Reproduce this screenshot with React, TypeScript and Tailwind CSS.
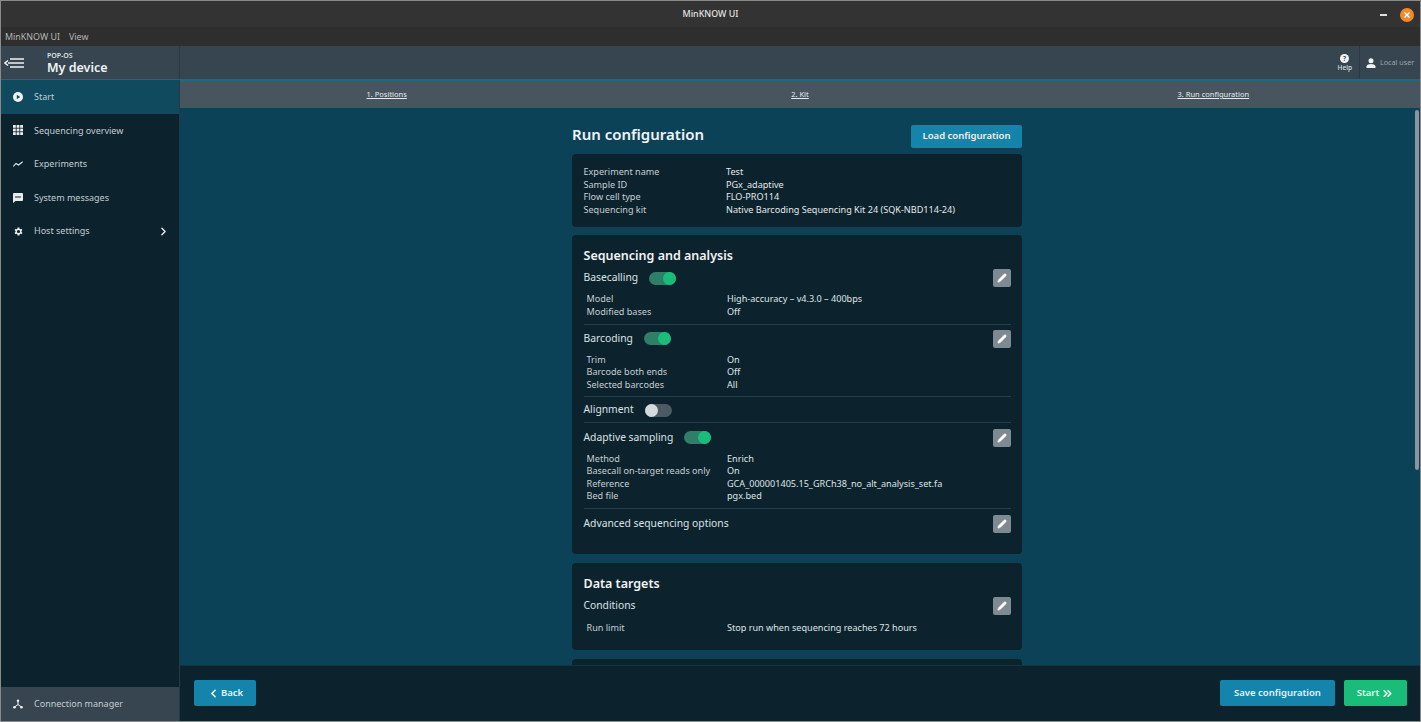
import { ChevronLeft, ChevronRight, ChevronsRight, Pencil } from "lucide-react";

const sideItems = [
  { label: "Start", icon: "play", active: true },
  { label: "Sequencing overview", icon: "grid" },
  { label: "Experiments", icon: "trend" },
  { label: "System messages", icon: "message" },
  { label: "Host settings", icon: "gear", arrow: true },
];

const SideIcon = ({ name }: { name: string }) => {
  if (name === "play")
    return (
      <svg width="10" height="10" viewBox="0 0 12 12">
        <circle cx="6" cy="6" r="6" fill="#f0f3f4" />
        <path d="M4.6 3.2 8.600 6 4.6 8.800z" fill="#0f4a5e" />
      </svg>
    );
  if (name === "grid")
    return (
      <svg width="10" height="10" viewBox="0 0 10 10" fill="#e8ecee">
        {[0, 3.6, 7.2].map((x) =>
          [0, 3.6, 7.2].map((y) => <rect key={`${x}-${y}`} x={x} y={y} width="2.8" height="2.8" />)
        )}
      </svg>
    );
  if (name === "trend")
    return (
      <svg width="10" height="6" viewBox="0 0 10 6" fill="none" stroke="#e8ecee" strokeWidth="1.1">
        <path d="M.3 5.500 3 2.500 5.500 4 9.700 .8" />
      </svg>
    );
  if (name === "message")
    return (
      <svg width="10" height="10" viewBox="0 0 10 10">
        <path d="M1 0h8a1 1 0 0 1 1 1v6a1 1 0 0 1-1 1H2.500L0 10V1a1 1 0 0 1 1-1z" fill="#e8ecee" />
        <rect x="2" y="3.500" width="6" height="1" fill="#0c232e" />
      </svg>
    );
  if (name === "gear")
    return (
      <svg width="11" height="11" viewBox="0 0 24 24" fill="#e8ecee">
        <path d="M19.400 13a7.500 7.500 0 0 0 0-2l2.100-1.600-2-3.500-2.500 1a7.500 7.500 0 0 0-1.700-1L15 3.300h-4l-.4 2.600a7.500 7.500 0 0 0-1.700 1l-2.500-1-2 3.500L6.500 11a7.500 7.500 0 0 0 0 2l-2.100 1.600 2 3.500 2.500-1a7.500 7.500 0 0 0 1.700 1l.4 2.600h4l.4-2.600a7.500 7.500 0 0 0 1.700-1l2.500 1 2-3.500zM13 15.500a3.500 3.500 0 1 1 0-7 3.500 3.500 0 0 1 0 7z" transform="translate(-1 0)" />
      </svg>
    );
  return null;
};

const EditButton = () => (
  <div className="ml-auto flex h-[18px] w-[18px] items-center justify-center rounded-[2px] bg-[#7d8a91]">
    <Pencil size={10} color="#ffffff" fill="#ffffff" strokeWidth={1.5} />
  </div>
);

const Toggle = ({ on }: { on: boolean }) =>
  on ? (
    <div className="relative ml-[11px] h-[13px] w-[27px] rounded-full bg-[#2f7f68]">
      <div className="absolute right-0 top-0 h-[13px] w-[13px] rounded-full bg-[#19bd79]" />
    </div>
  ) : (
    <div className="relative ml-[11px] h-[13px] w-[27px] rounded-full bg-[#4c5a64]">
      <div className="absolute left-0 top-0 h-[13px] w-[13px] rounded-full bg-[#d5dadd]" />
    </div>
  );

const Details = ({ rows }: { rows: string[][] }) => (
  <div className="pl-[3px]">
    {rows.map(([k, v]) => (
      <div key={k} className="flex h-[12.5px] items-center whitespace-nowrap text-[9.100px] leading-[12.5px]">
        <div className="w-[140.500px] text-[#c6ced2]">{k}</div>
        <div className="text-[#dfe4e6]">{v}</div>
      </div>
    ))}
  </div>
);

const Section = ({ title, toggle, edit = true }: { title: string; toggle?: boolean; edit?: boolean }) => (
  <div className="flex h-[18px] items-center">
    <span className="text-[10.300px] text-[#dde2e5]">{title}</span>
    {toggle !== undefined && <Toggle on={toggle} />}
    {edit && <EditButton />}
  </div>
);

const Divider = () => <div className="h-px bg-[#24404c]" />;

export default function App() {
  return (
    <div
      className="flex h-[722px] w-[1421px] flex-col overflow-hidden border border-[#8a8a8a] bg-[#0c232e]"
      style={{ fontFamily: '"Noto Sans", sans-serif' }}
    >
      <div className="relative flex h-[26px] shrink-0 items-center justify-center bg-[#333333] text-[8.900px] font-medium text-[#e4e4e4]">
        MinKNOW UI
        <div className="absolute right-[6px] top-[7px] flex items-center gap-[13px]">
          <div className="h-[1.500px] w-[7px] bg-[#e0e0e0]" />
          <div className="flex h-[14px] w-[14px] items-center justify-center rounded-full bg-[#f08a2c]">
            <svg width="6" height="6" viewBox="0 0 6 6" stroke="#ffffff" strokeWidth="1.400">
              <path d="M.5 .5l5 5M5.500 .5l-5 5" />
            </svg>
          </div>
        </div>
      </div>
      <div className="flex h-[19px] shrink-0 items-center gap-[9px] bg-[#2e2e2e] pl-[4px] text-[8.900px] text-[#b5b5b5]">
        <span>MinKNOW UI</span>
        <span>View</span>
      </div>
      <div className="flex h-[34px] shrink-0 border-b border-[#1b6a85] bg-[#36454f]">
        <div className="flex w-[179px] items-center border-r border-[#2c3a43] pt-[1px]">
          <svg width="22" height="10" viewBox="0 0 22 10" className="ml-[3px]" fill="none" stroke="#f0f3f4" strokeWidth="1.500">
            <path d="M6 1h14M4 5h16M6 9h14M4 2.500 1 5l3 2.500" />
          </svg>
          <div className="ml-[21px] flex flex-col">
            <span className="text-[7px] font-semibold leading-[9px] text-[#dde2e5]">POP-OS</span>
            <span className="text-[12.500px] font-semibold leading-[16px] text-[#f0f3f4]">My device</span>
          </div>
        </div>
        <div className="flex flex-1 items-center justify-end">
          <div className="flex flex-col items-center pr-[7px]">
            <svg width="9" height="9" viewBox="0 0 10 10">
              <circle cx="5" cy="5" r="5" fill="#f0f3f4" />
              <text x="5" y="7.500" textAnchor="middle" fontSize="7" fontWeight="700" fill="#36454f">?</text>
            </svg>
            <span className="text-[6.500px] font-medium leading-[9px] text-[#dde2e5]">Help</span>
          </div>
          <div className="flex h-full w-[61px] items-center border-l border-[#2c3a43] pl-[6px]">
            <svg width="10" height="10" viewBox="0 0 10 10" fill="#f0f3f4">
              <circle cx="5" cy="2.700" r="2.500" />
              <path d="M.5 10V8.500C.5 6.800 3 6 5 6s4.500.8 4.500 2.500V10z" />
            </svg>
            <span className="ml-[4px] text-[7.200px] text-[#9aa5ab]">Local user</span>
          </div>
        </div>
      </div>
      <div className="flex min-h-0 flex-1">
        <div className="flex w-[179px] shrink-0 flex-col border-r border-[#243a45] bg-[#0c232e]">
          {sideItems.map((item) => (
            <div
              key={item.label}
              className={`flex h-[33.600px] items-center ${item.active ? "bg-[#0f4a5e]" : ""}`}
            >
              <div className="flex w-[33px] shrink-0 items-center justify-center pl-[1px]">
                <SideIcon name={item.icon} />
              </div>
              <span className="text-[9px] text-[#c3ccd0]">{item.label}</span>
              {item.arrow && <ChevronRight size={13} color="#e8ecee" strokeWidth={2.500} className="ml-auto mr-[9px]" />}
            </div>
          ))}
          <div className="mt-auto flex h-[34px] items-center bg-[#36454f]">
            <div className="flex w-[33px] shrink-0 items-center justify-center pl-[1px]">
              <svg width="10" height="10" viewBox="0 0 10 10" fill="#f0f3f4" stroke="#f0f3f4">
                <path d="M5 2v3.500M5 5.500 1.500 8M5 5.500 8.500 8" strokeWidth="1" />
                <circle cx="5" cy="1.800" r="1.200" strokeWidth="0" />
                <circle cx="1.500" cy="8.200" r="1.300" strokeWidth="0" />
                <circle cx="8.500" cy="8.200" r="1.300" strokeWidth="0" />
              </svg>
            </div>
            <span className="text-[9px] text-[#c3ccd0]">Connection manager</span>
          </div>
        </div>
        <div className="flex min-w-0 flex-1 flex-col">
          <div className="grid h-[28px] shrink-0 grid-cols-3 items-center border-t border-[#1b6a85] bg-[#47555f] text-center text-[7.500px] text-[#e6eaec] underline">
            <span>1. Positions</span>
            <span>2. Kit</span>
            <span>3. Run configuration</span>
          </div>
          <div className="relative min-h-0 flex-1 overflow-hidden bg-[#0b4257]">
            <div className="absolute right-[1px] top-[2px] h-[360px] w-[4px] rounded-full bg-[#8b969c]" />
            <div className="ml-[392px] w-[450px] pt-[16px]">
              <div className="flex h-[24px] items-start justify-between">
                <h1 className="text-[15px] font-semibold leading-[21px] text-[#f2f4f5]">Run configuration</h1>
                <button className="mt-[1px] h-[23px] w-[111px] rounded-[2px] bg-[#1484ab] text-[9.500px] font-semibold text-[#eef2f4]">
                  Load configuration
                </button>
              </div>
              <div className="mt-[6px] h-[73px] rounded-[4px] bg-[#0c232e] px-[11.500px] pt-[12px]">
                {[
                  ["Experiment name", "Test"],
                  ["Sample ID", "PGx_adaptive"],
                  ["Flow cell type", "FLO-PRO114"],
                  ["Sequencing kit", "Native Barcoding Sequencing Kit 24 (SQK-NBD114-24)"],
                ].map(([k, v]) => (
                  <div key={k} className="flex h-[12.5px] items-center whitespace-nowrap text-[9.100px] leading-[12.5px]">
                    <div className="w-[142.500px] text-[#c6ced2]">{k}</div>
                    <div className="text-[#e4e8ea]">{v}</div>
                  </div>
                ))}
              </div>
              <div className="mt-[8px] h-[319px] rounded-[4px] bg-[#0c232e] px-[11.500px] pt-[12px]">
                <h2 className="text-[12.500px] font-semibold leading-[17px] text-[#f2f4f5]">Sequencing and analysis</h2>
                <div className="mt-[5px]">
                  <Section title="Basecalling" toggle={true} />
                </div>
                <div className="pt-[6px]">
                  <Details rows={[["Model", "High-accuracy – v4.3.0 – 400bps"], ["Modified bases", "Off"]]} />
                </div>
                <div className="mt-[5.500px]">
                  <Divider />
                </div>
                <div className="mt-[5px]">
                  <Section title="Barcoding" toggle={true} />
                </div>
                <div className="pt-[6px]">
                  <Details rows={[["Trim", "On"], ["Barcode both ends", "Off"], ["Selected barcodes", "All"]]} />
                </div>
                <div className="mt-[5px]">
                  <Divider />
                </div>
                <div className="mt-[4px]">
                  <Section title="Alignment" toggle={false} edit={false} />
                </div>
                <div className="mt-[3px]">
                  <Divider />
                </div>
                <div className="mt-[5.500px]">
                  <Section title="Adaptive sampling" toggle={true} />
                </div>
                <div className="pt-[6px]">
                  <Details
                    rows={[
                      ["Method", "Enrich"],
                      ["Basecall on-target reads only", "On"],
                      ["Reference", "GCA_000001405.15_GRCh38_no_alt_analysis_set.fa"],
                      ["Bed file", "pgx.bed"],
                    ]}
                  />
                </div>
                <div className="mt-[5.500px]">
                  <Divider />
                </div>
                <div className="mt-[6px]">
                  <Section title="Advanced sequencing options" />
                </div>
              </div>
              <div className="mt-[9px] h-[87px] rounded-[4px] bg-[#0c232e] px-[11.500px] pt-[12px]">
                <h2 className="text-[12.500px] font-semibold leading-[17px] text-[#f2f4f5]">Data targets</h2>
                <div className="mt-[5px]">
                  <Section title="Conditions" />
                </div>
                <div className="pt-[7px]">
                  <Details rows={[["Run limit", "Stop run when sequencing reaches 72 hours"]]} />
                </div>
              </div>
              <div className="mt-[9px] h-[40px] rounded-[4px] bg-[#0c232e]" />
            </div>
          </div>
          <div className="flex h-[56px] shrink-0 items-start justify-between border-t border-[#16323e] bg-[#0c232e] pl-[14px] pr-[13px] pt-[14px]">
            <button className="flex h-[26px] w-[62px] items-center justify-center gap-[1px] rounded-[2px] bg-[#1484ab] text-[9.500px] font-semibold text-[#eef2f4]">
              <ChevronLeft size={13} strokeWidth={3} />
              Back
            </button>
            <div className="flex gap-[9px]">
              <button className="h-[26px] w-[115px] rounded-[2px] bg-[#1484ab] text-[9.500px] font-semibold text-[#eef2f4]">
                Save configuration
              </button>
              <button className="flex h-[26px] w-[63px] items-center justify-center gap-[2px] rounded-[2px] bg-[#19bd79] text-[9.500px] font-semibold text-[#f2fbf7]">
                Start
                <ChevronsRight size={13} strokeWidth={3} />
              </button>
            </div>
          </div>
        </div>
      </div>
    </div>
  );
}
